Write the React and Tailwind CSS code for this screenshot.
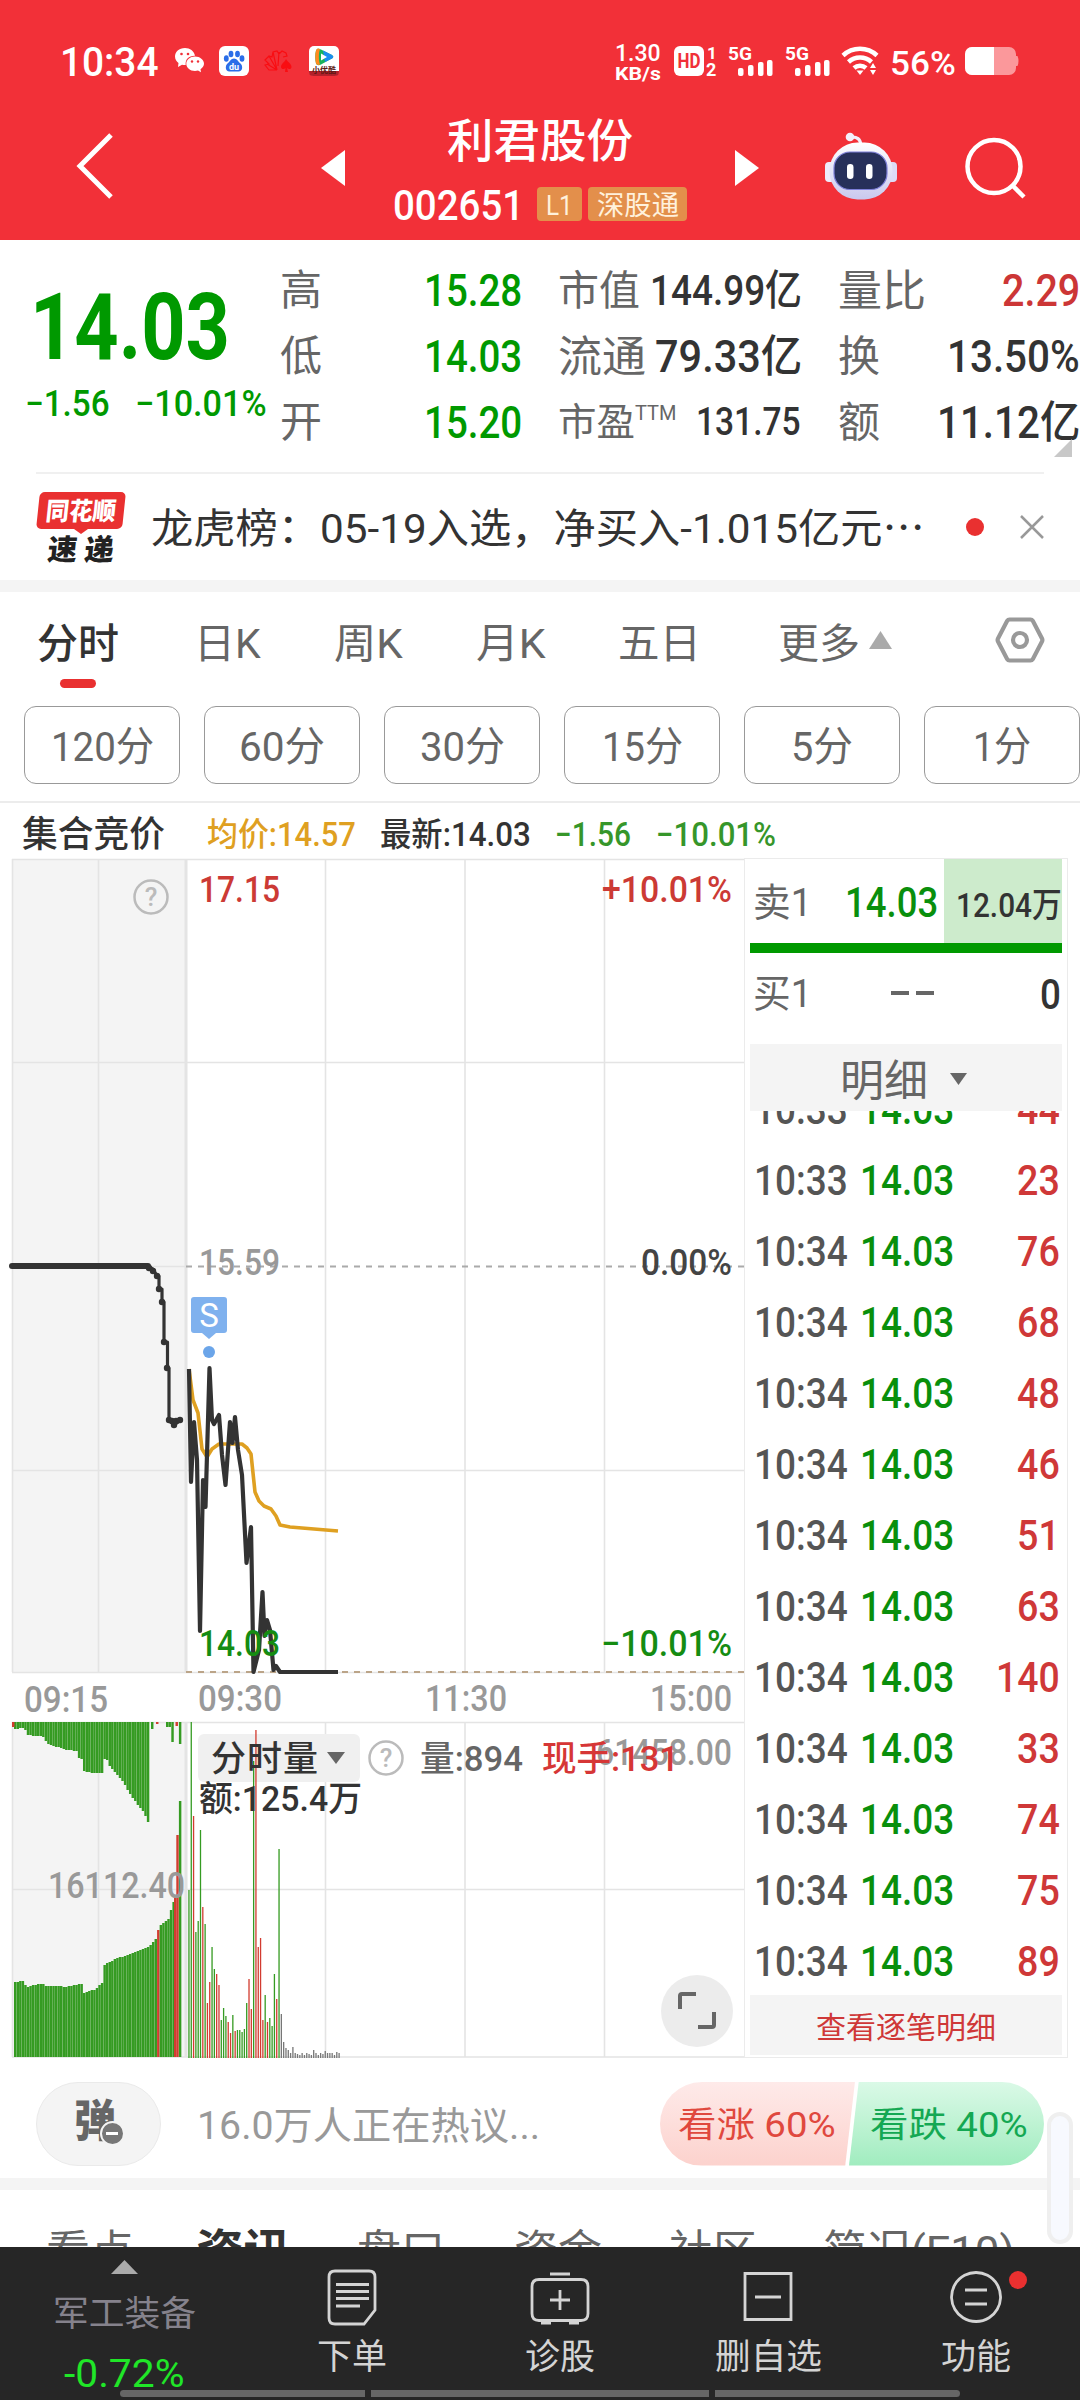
import { useLayoutEffect, useRef, useState } from "react";

// Single line of text, squeezed or stretched to the width of its box
const Fit = ({ className, children }) => {
  const box = useRef(null);
  const text = useRef(null);
  const [scale, setScale] = useState(1);

  useLayoutEffect(() => {
    setScale(box.current.clientWidth / text.current.offsetWidth);
  }, [children]);

  return (
    <div ref={box} className={"flex shrink-0 whitespace-nowrap leading-none " + className}>
      <span
        ref={text}
        className="inline-block shrink-0 origin-left"
        style={{ transform: `translateY(1.5px) scaleX(${scale})` }}
      >
        {children}
      </span>
    </div>
  );
};

const Signal = () => (
  <svg className="h-[32px] w-[46px] shrink-0" viewBox="0 0 46 32">
    <text x="0" y="15" fontSize="19" fontWeight="700" fill="#fff" textLength="24" lengthAdjust="spacingAndGlyphs">
      5G
    </text>
    <g fill="#fff">
      <rect x="10" y="23" width="5.500" height="8" rx="2" />
      <rect x="20" y="20" width="5.500" height="11" rx="2" />
      <rect x="30" y="17" width="5.500" height="14" rx="2" />
      <rect x="39" y="15" width="5.500" height="16" rx="2" />
    </g>
  </svg>
);

const StatusBar = () => (
  <div className="flex h-[106px] items-center pt-[15px] text-white">
    <Fit className="ml-[60px] w-[98px] text-[40px] font-medium">10:34</Fit>
    {/* 알림 아이콘 */}
    <svg className="ml-[17px] h-[25px] w-[29px]" viewBox="0 0 29 25">
      <path d="M10 0C4 0 0 4 0 8.600c0 3 1.500 5 3.500 6.500L3 19l4-2.300c1.200.3 2.500.4 3.700.3C10 11 14 7.500 20 7.700 19 3 15 0 10 0z" fill="#fff" />
      <path d="M20 8.500c-5 0-8.700 3.400-8.700 7.300s3.700 7.200 8.700 7.200c1 0 2-.2 3-.5l3 1.800-.5-3c2-1.400 3.500-3.300 3.500-5.500 0-4-4-7.300-9-7.300z" fill="#fff" />
      <g fill="#f03038">
        <circle cx="6.500" cy="6" r="1.300" />
        <circle cx="13" cy="6" r="1.300" />
        <circle cx="17" cy="13.500" r="1.200" />
        <circle cx="23" cy="13.500" r="1.200" />
      </g>
    </svg>
    <svg className="ml-[15px] h-[30px] w-[30px]" viewBox="0 0 30 30">
      <rect width="30" height="30" rx="6" fill="#fff" />
      <g fill="#2b6de8">
        <ellipse cx="7.300" cy="12.500" rx="2.400" ry="3.200" />
        <ellipse cx="12" cy="8" rx="2.400" ry="3.300" />
        <ellipse cx="18.500" cy="8" rx="2.400" ry="3.300" />
        <ellipse cx="23" cy="12.500" rx="2.400" ry="3.200" />
        <path d="M15 12.500c3 0 4 3 6.500 5s2.500 8-2 8h-9c-4.500 0-4.500-6-2-8s3.500-5 6.500-5z" />
      </g>
      <text x="15" y="24" fontSize="9" fontWeight="700" fill="#fff" textAnchor="middle">du</text>
    </svg>
    <svg className="ml-[15px] h-[24px] w-[29px]" viewBox="0 0 29 24" fill="none" stroke="#f90d12" strokeWidth="1.200">
      <path d="M13 21H5l-4-5 4-1-4-4 4-4 3 1 1-5 4-1 2 3 3-3 4 2 1 3-4 1M3 15l10 6M5 7l8 14M9 3l4 18M15 3l-1 14" />
      <path d="M22 10c-1 3-5 4.500-5 8 0 2 3 3 4.500 1L21 23h3l-1-4c2 2 4.500 1 4.500-1 0-3.500-4-5-5.500-8z" fill="#f90d12" stroke="none" />
    </svg>
    <svg className="ml-[16px] h-[30px] w-[30px]" viewBox="0 0 30 30">
      <rect width="30" height="30" rx="5" fill="#fff" />
      <path d="M7 4.500C8 2 10 2.500 12 3.500L22 8.500c3 1.500 3 3 0 4.500L12 18.500c-2 1-4 1-5-1C6 14 6 8 7 4.500z" fill="#19b35a" />
      <path d="M7 4.500C8 2 10 2.500 11 3c-1.500 4-1.500 11 0 15.500-2 1-3.500 0-4-1C6 14 6 8 7 4.500z" fill="#ff8a1f" />
      <path d="M14 4.500l8 4c3 1.500 3 3 0 4.500l-6 3z" fill="#1c8df0" />
      <path d="M12 7.500l6 3.500-6 3.500z" fill="#fff" />
      <path d="M0 25h30v1a4 4 0 0 1-4 4H4a4 4 0 0 1-4-4z" fill="#b3202a" />
      <text x="15" y="27" fontSize="8" fontWeight="700" fill="#5a1a14" textAnchor="middle">小优酷</text>
    </svg>

    <div className="ml-[276px] flex flex-col gap-[0px]">
      <Fit className="w-[46px] text-[23px] font-medium">1.30</Fit>
      <Fit className="w-[46px] text-[18px] font-bold">KB/s</Fit>
    </div>
    <svg className="ml-[13px] h-[32px] w-[43px]" viewBox="0 0 43 32">
      <rect x="0" y="1" width="30" height="30" rx="6" fill="#fff" />
      <text x="3.500" y="23" fontSize="20" fontWeight="700" fill="#f03038" textLength="23" lengthAdjust="spacingAndGlyphs">HD</text>
      <text x="33" y="14" fontSize="17" fontWeight="700" fill="#fff">1</text>
      <text x="32" y="31" fontSize="18" fontWeight="700" fill="#fff">2</text>
    </svg>
    <div className="ml-[11px] flex gap-[11px]">
      <Signal />
      <Signal />
    </div>
    <svg className="ml-[10px] h-[30px] w-[40px]" viewBox="0 0 40 30" fill="none" stroke="#fff" strokeWidth="4.500">
      <path d="M2 9.500a25 25 0 0 1 34 0M7.500 16a17 17 0 0 1 23 0M13 22a9 9 0 0 1 12 0" />
      <path d="M15.500 24.500h7L19 29z" fill="#fff" stroke="none" />
      <path d="M29 22l3-5 3 5zM29 24l3 5 3-5z" fill="#fff" stroke="none" />
    </svg>
    <Fit className="mt-[2px] ml-[9px] w-[66px] text-[33px] font-medium">56%</Fit>
    <svg className="ml-[9px] h-[28px] w-[55px]" viewBox="0 0 55 28">
      <path d="M7 0h37a7 7 0 0 1 7 7v2h1.500q2 5 0 10H51v2a7 7 0 0 1-7 7H7a7 7 0 0 1-7-7V7a7 7 0 0 1 7-7z" fill="#fb989b" />
      <path d="M7 0h22v28H7a7 7 0 0 1-7-7V7a7 7 0 0 1 7-7z" fill="#fff" />
    </svg>
  </div>
);

const Robot = () => (
  <svg className="ml-[64px] h-[68px] w-[76px]" viewBox="0 0 76 68">
    <defs>
      <linearGradient id="shell" x1="0" y1="0" x2="0" y2="1">
        <stop offset="0" stopColor="#fff" />
        <stop offset="1" stopColor="#c9c8ee" />
      </linearGradient>
    </defs>
    <rect x="2" y="30" width="10" height="20" rx="4" fill="#eeecfb" />
    <rect x="64" y="30" width="10" height="20" rx="4" fill="#dddbf6" />
    <path d="M28 5q9-1 10 8" fill="none" stroke="#f3effb" strokeWidth="3" />
    <circle cx="27" cy="5" r="4.300" fill="#f4f0fb" />
    <rect x="6.500" y="10.500" width="63" height="57" rx="28" fill="url(#shell)" />
    <rect x="11" y="20" width="53" height="37.500" rx="16" fill="#27305a" stroke="#7d7fd8" strokeWidth="1.200" />
    <rect x="24" y="32" width="6.500" height="15" rx="3.200" fill="#fff" />
    <rect x="43" y="32" width="6.500" height="15" rx="3.200" fill="#fff" />
  </svg>
);

const TitleBar = () => (
  <div className="flex h-[134px] items-start">
    <svg className="mt-[27px] ml-[76px] h-[66px] w-[38px]" viewBox="0 0 38 66" fill="none" stroke="#fff" strokeWidth="5">
      <path d="M35 2L4 33L35 64" />
    </svg>
    <svg className="mt-[44px] ml-[207px] h-[36px] w-[24px]" viewBox="0 0 24 36">
      <path d="M24 0v36L0 18z" fill="#fff" />
    </svg>
    <div className="ml-[48px] flex w-[294px] flex-col items-center text-white">
      <Fit className="mt-[10px] -ml-[1px] w-[186px] text-[46px] font-medium">利君股份</Fit>
      <div className="mt-[21px] flex h-[42px] items-center">
        <Fit className="w-[131px] text-[42px] font-medium">002651</Fit>
        <div className="ml-[13px] flex h-[34px] w-[45px] items-center justify-center rounded-[4px] bg-[#e38f4b]">
          <Fit className="w-[27px] text-[27px] text-[#fff1dc]">L1</Fit>
        </div>
        <div className="ml-[6px] flex h-[34px] w-[99px] items-center justify-center rounded-[4px] bg-[#e38f4b]">
          <Fit className="w-[82px] text-[27px] text-[#fff1dc]">深股通</Fit>
        </div>
      </div>
    </div>
    <svg className="mt-[44px] ml-[48px] h-[36px] w-[24px]" viewBox="0 0 24 36">
      <path d="M0 0v36L24 18z" fill="#fff" />
    </svg>
    <div className="mt-[26px]">
      <Robot />
    </div>
    <svg className="mt-[31px] ml-[66px] h-[62px] w-[64px]" viewBox="0 0 64 62" fill="none" stroke="#fff" strokeWidth="4.500">
      <circle cx="29" cy="29.500" r="26.500" />
      <path d="M47 48L59 60" />
    </svg>
  </div>
);

const Quote = () => (
  <div className="flex h-[232px] pt-[16px]">
    <div className="w-[280px] text-[#009900]">
      <Fit className="mt-[24px] ml-[30px] w-[200px] text-[92px] font-bold">14.03</Fit>
      <div className="mt-[12px] flex h-[36px] items-center text-[36px] font-medium">
        <Fit className="ml-[25px] w-[85px]">−1.56</Fit>
        <Fit className="ml-[25px] w-[132px]">−10.01%</Fit>
      </div>
    </div>
    <div className="w-[242px] text-[44px] font-medium text-[#009900]">
      {[["高", "15.28"], ["低", "14.03"], ["开", "15.20"]].map(([name, value]) => (
        <div key={name} className="flex h-[66px] items-center justify-between">
          <Fit className="w-[42px] text-[42px] font-normal text-[#666]">{name}</Fit>
          <Fit className="w-[98px]">{value}</Fit>
        </div>
      ))}
    </div>
    <div className="ml-[36px] w-[244px] text-[#333]">
      <div className="flex h-[66px] items-center justify-between">
        <Fit className="w-[82px] text-[41px] text-[#666]">市值</Fit>
        <Fit className="w-[152px] text-[42px] font-medium">144.99亿</Fit>
      </div>
      <div className="flex h-[66px] items-center justify-between">
        <Fit className="w-[88px] text-[43px] text-[#666]">流通</Fit>
        <Fit className="w-[147px] text-[44px] font-medium">79.33亿</Fit>
      </div>
      <div className="flex h-[66px] items-center text-[#666]">
        <Fit className="-mt-[2px] w-[77px] text-[38px]">市盈</Fit>
        <Fit className="-mt-[20px] w-[41px] text-[20px]">TTM</Fit>
        <Fit className="-mt-[2px] ml-[20px] w-[105px] text-[38px] font-medium text-[#333]">131.75</Fit>
      </div>
    </div>
    <div className="relative ml-[36px] w-[242px] text-[44px] font-medium text-[#333]">
      <div className="flex h-[66px] items-center justify-between">
        <Fit className="w-[88px] text-[43px] font-normal text-[#666]">量比</Fit>
        <Fit className="w-[78px] text-[#cc3636]">2.29</Fit>
      </div>
      <div className="flex h-[66px] items-center justify-between">
        <Fit className="w-[42px] text-[42px] font-normal text-[#666]">换</Fit>
        <Fit className="w-[133px]">13.50%</Fit>
      </div>
      <div className="flex h-[66px] items-center justify-between">
        <Fit className="w-[42px] text-[42px] font-normal text-[#666]">额</Fit>
        <Fit className="w-[143px]">11.12亿</Fit>
      </div>
      <svg className="absolute top-[183px] right-[8px] h-[18px] w-[18px]" viewBox="0 0 18 18">
        <path d="M18 0v18H0z" fill="#c8c8c8" />
      </svg>
    </div>
  </div>
);

const News = () => (
  <div className="mx-[36px] flex h-[108px] items-center border-t-2 border-[#f0f0f0]">
    <div className="flex w-[90px] flex-col items-center">
      <div className="flex h-[37px] w-[86px] -skew-x-6 items-center justify-center rounded-[5px] bg-[#e93030]">
        <Fit className="-mt-[3px] w-[70px] text-[25px] font-black text-white">同花顺</Fit>
      </div>
      <svg className="h-[5px] w-[14px]" viewBox="0 0 14 5">
        <path d="M0 0h14L7 5z" fill="#e93030" />
      </svg>
      <div className="-skew-x-6">
        <Fit className="w-[66px] text-[29px] font-black text-[#222]">速 递</Fit>
      </div>
    </div>
    <Fit className="ml-[25px] w-[774px] text-[41px] text-[#333]">龙虎榜：05-19入选，净买入-1.015亿元⋯</Fit>
    <div className="ml-[41px] h-[18px] w-[18px] rounded-full bg-[#e93030]" />
    <svg className="ml-[36px] h-[24px] w-[24px]" viewBox="0 0 24 24" stroke="#999" strokeWidth="2.500">
      <path d="M1 1L23 23M23 1L1 23" />
    </svg>
  </div>
);

const ChartTabs = () => (
  <div className="flex h-[114px] items-start pt-[30px] text-[41px] text-[#666]">
    <div className="ml-[37px] flex flex-col items-center">
      <Fit className="w-[82px] font-medium text-[#333]">分时</Fit>
      <div className="mt-[16px] h-[9px] w-[36px] rounded-full bg-[#e93030]" />
    </div>
    <Fit className="ml-[75px] w-[67px]">日K</Fit>
    <Fit className="ml-[73px] w-[69px]">周K</Fit>
    <Fit className="ml-[73px] w-[70px]">月K</Fit>
    <Fit className="ml-[72px] w-[83px]">五日</Fit>
    <Fit className="ml-[77px] w-[82px]">更多</Fit>
    <svg className="mt-[9px] ml-[9px] h-[18px] w-[23px]" viewBox="0 0 23 18">
      <path d="M11.500 0L23 18H0z" fill="#aaa" />
    </svg>
    <svg className="-mt-[5px] ml-[103px] h-[46px] w-[50px]" viewBox="0 0 50 46" fill="none" stroke="#999" strokeWidth="4.200">
      <path d="M14.500 2.500h21q1.500 0 2.300 1.300L47 21.500q.8 1.500 0 3l-9.200 17.700q-.8 1.300-2.300 1.300h-21q-1.500 0-2.300-1.300L3 24.500q-.8-1.500 0-3L12.200 3.800q.8-1.300 2.300-1.300z" />
      <circle cx="25" cy="23" r="7" />
    </svg>
  </div>
);

const periods = [
  ["120分", "w-[103px]"],
  ["60分", "w-[86px]"],
  ["30分", "w-[85px]"],
  ["15分", "w-[81px]"],
  ["5分", "w-[62px]"],
  ["1分", "w-[58px]"],
];

const Periods = () => (
  <div className="flex h-[97px] gap-[24px] border-b-2 border-[#ececec] pl-[24px]">
    {periods.map(([label, width]) => (
      <div
        key={label}
        className="flex h-[78px] w-[156px] shrink-0 items-center justify-center rounded-[12px] border border-[#999]"
      >
        <Fit className={"text-[41px] text-[#666] " + width}>{label}</Fit>
      </div>
    ))}
  </div>
);

const InfoLine = () => (
  <div className="flex h-[55px] items-center pt-[4px] text-[33px] font-medium text-[#333]">
    <Fit className="ml-[22px] w-[143px] text-[36px]">集合竞价</Fit>
    <Fit className="ml-[42px] w-[149px] text-[#dfa021]">均价:14.57</Fit>
    <Fit className="ml-[24px] w-[151px]">最新:14.03</Fit>
    <Fit className="ml-[24px] w-[76px] text-[#36962a]">−1.56</Fit>
    <Fit className="ml-[25px] w-[120px] text-[#36962a]">−10.01%</Fit>
  </div>
);

const GREEN = "#359b22";
const RED = "#d23c30";

// 집합경쟁 구간 상단/하단 막대 윤곽 [x, y]
const auctionTop = [
  [12, 1729], [24, 1728], [25, 1735], [36, 1736], [44, 1737], [45, 1743], [53, 1746], [66, 1750], [76, 1751],
  [78, 1758], [82, 1759], [83, 1771], [91, 1773], [102, 1773], [103, 1759], [107, 1761], [109, 1767],
  [115, 1774], [122, 1782], [128, 1793], [137, 1805], [143, 1813], [146, 1820], [148.500, 1825],
];
const auctionBottom = [
  [12, 1982], [23, 1981], [25, 1987], [37, 1984], [43, 1984], [45, 1986], [57, 1986], [63, 1987], [80, 1984],
  [82, 1984], [83, 1993], [95, 1989], [100, 1983], [102, 1983], [103.500, 1964], [117, 1958], [133, 1953],
  [148, 1946], [153, 1941], [155, 1939], [159, 1925], [168, 1918], [170, 1909], [172, 1903], [175, 1897],
];

const levelAt = (points, x) => {
  const i = points.findIndex((p) => p[0] >= x);
  if (i <= 0) return i === 0 ? points[0][1] : points[points.length - 1][1];
  const [x0, y0] = points[i - 1];
  const [x1, y1] = points[i];
  return Math.round(y0 + ((y1 - y0) * (x - x0)) / (x1 - x0));
};

const auctionBars = [];
for (let i = 0; i < 66; i++) {
  const x = 14 + i * 2.555;
  if (x < 148) {
    auctionBars.push({ x, y: 1722, h: levelAt(auctionTop, x) - 1722, fill: GREEN });
  }
  if (x < 174) {
    const red = i === 56;
    const y = red ? 1930 : levelAt(auctionBottom, x);
    auctionBars.push({ x, y, h: 2057 - y, fill: red ? RED : GREEN });
  }
}
auctionBars.push(
  { x: 12, y: 1722, h: 5, fill: RED },
  { x: 151, y: 1722, h: 7, fill: GREEN },
  { x: 156, y: 1722, h: 2, fill: RED },
  { x: 166, y: 1722, h: 5, fill: GREEN },
  { x: 168.500, y: 1722, h: 5, fill: GREEN },
  { x: 171.300, y: 1722, h: 20, fill: GREEN },
  { x: 175.500, y: 1722, h: 4, fill: RED },
  { x: 178.900, y: 1722, h: 22, fill: GREEN },
  { x: 174, y: 1896, h: 161, fill: RED },
  { x: 176.300, y: 1835, h: 222, fill: RED },
  { x: 178.900, y: 1801, h: 256, fill: GREEN }
);

// 분시 거래량: 상단 y 좌표와 색 (g 녹색 r 적색 k 회색)
const volumes =
  "1890g 1722g 1816r 1932g 1921g 1830g 1907r 1924g 2003r 1982r 1947g 1969g 1974r 1985r 2020g 2008g 2016g 2022r 2033r 2015g 2031r 2030g 2030g 2032g 2029g 2003g 1979r 2009r 1761g 1730r 1947r 1938r 2020r 1995g 2022r 2018g 2026g 1974g 1999r 1849g 2014k 2042k 2048k 2050k 2053k 2047k 2053k 2054k 2055k 2053k 2055k 2053k 2054k 2055k 2050k 2053k 2055k 2053k 2054k 2051k 2053k 2053k 2053k 2055k 2052k 2053k".split(
    " "
  );
const volumeColors = { g: GREEN, r: RED, k: "#777" };

const price =
  "189,1369 191,1482 194,1422 197,1460 200,1631 203,1480 205.500,1507 209.500,1368 212,1420 214,1424 219,1415 222,1455 225.500,1485 230,1422 232.500,1443 235,1417 238,1450 242,1475 246.500,1563 251,1527 253.500,1672 259,1650 262.500,1592 264.500,1636 267,1620 270,1630 273.500,1670 276,1666 280,1672 338,1672";
const average =
  "189,1369 193,1400 198,1413 202,1449 207,1457 212,1449 219,1444 242,1444 247,1448 251,1454 255,1492 259,1501 264,1506 271,1509 276,1516 280,1525 290,1527 338,1531";
const auction =
  "12,1266 148,1266 153,1269 157,1276 159,1276 159,1289 162,1289 162,1302 164,1302 164,1342 167.500,1342 167.500,1368 169,1368 169,1420 174,1425 181,1420";

const Label = ({ x, y, w, fill = "#999", size = 36, children }) => (
  <text x={x} y={y} fill={fill} fontSize={size} fontWeight="500" textLength={w} lengthAdjust="spacingAndGlyphs">
    {children}
  </text>
);

const Help = ({ cx, cy }) => (
  <g>
    <circle cx={cx} cy={cy} r="16.500" fill="none" stroke="#bbb" strokeWidth="2.500" />
    <text x={cx} y={cy + 9} fill="#bbb" fontSize="26" fontWeight="500" textAnchor="middle">?</text>
  </g>
);

const Chart = () => (
  <svg className="h-[1200px] w-[744px] shrink-0" viewBox="0 858 744 1200">
    <rect x="12" y="859" width="174" height="813" fill="#f4f4f4" />
    <rect x="12" y="1722" width="174" height="335" fill="#f4f4f4" />
    <g stroke="#e4e4e4" strokeWidth="1.600">
      <path d="M12 859.500H744M12 1062.500H744M12 1266.500H186M12 1470.500H744M12 1672.500H744" />
      <path d="M12 1722.500H744M12 1889.500H744M12 2057H744" />
      {[12.5, 98.5, 325.5, 465, 604.5].map((x) => (
        <path key={x} d={`M${x} 859V1672M${x} 1722V2057`} />
      ))}
      <path d="M186 859V1672M186 1722V2057" strokeWidth="3" />
    </g>
    <path d="M186 1266.500H744" stroke="#aaa" strokeWidth="1.800" strokeDasharray="6 6" />
    <path d="M186 1672H744" stroke="#bba488" strokeWidth="2" strokeDasharray="6 6" />

    <rect x="198" y="1734" width="162" height="48" rx="6" fill="#f0f0f0" />
    {/* 거래량 */}
    {auctionBars.map((bar, i) => (
      <rect key={i} x={bar.x} y={bar.y} width="2.450" height={bar.h} fill={bar.fill} />
    ))}
    {volumes.map((v, i) => {
      const top = Number(v.slice(0, 4));
      return (
        <rect key={i} x={188.300 + i * 2.310} y={top} width="1.300" height={2058 - top} fill={volumeColors[v[4]]} />
      );
    })}

    {/* 시세선 */}
    <g fill="none" strokeLinejoin="round">
      <polyline points={average} stroke="#dfa021" strokeWidth="3.600" />
      <polyline points={price} stroke="#333" strokeWidth="4.200" />
      <polyline points={auction} stroke="#333" strokeWidth="3.200" />
      <path d="M12 1266H148" stroke="#333" strokeWidth="6" strokeLinecap="round" />
    </g>
    <g fill="#333">
      {[[149, 1268], [153, 1271], [157, 1276], [159, 1289], [162, 1302], [164, 1342], [167, 1368], [169, 1420], [174, 1425], [172, 1421], [176, 1421], [180, 1420]].map(
        ([cx, cy]) => (
          <circle key={cx} cx={cx} cy={cy} r="3.200" />
        )
      )}
    </g>

    {/* 매도 표시 */}
    <path d="M194 1297h30q3 0 3 3v30q0 3-3 3h-8l-7 6-7-6h-8q-3 0-3-3v-30q0-3 3-3z" fill="#7fb1ee" />
    <text x="209" y="1327" fontSize="33" fill="#fff" textAnchor="middle">S</text>
    <circle cx="209" cy="1352" r="6" fill="#6ba5e9" />

    <Help cx={151} cy={897} />
    <Label x={199} y={902} w={81} fill="#cc3a35">17.15</Label>
    <Label x={602} y={902} w={130} fill="#cc3a35">+10.01%</Label>
    <Label x={199} y={1275} w={81}>15.59</Label>
    <Label x={641} y={1275} w={91} fill="#444">0.00%</Label>
    <Label x={199} y={1656} w={81} fill="#158c12">14.03</Label>
    <Label x={601} y={1656} w={131} fill="#158c12">−10.01%</Label>
    <Label x={24} y={1712} w={84}>09:15</Label>
    <Label x={198} y={1711} w={84}>09:30</Label>
    <Label x={425} y={1711} w={82}>11:30</Label>
    <Label x={650} y={1711} w={82}>15:00</Label>

    <text x="211" y="1771" fontSize="35" fontWeight="500" fill="#333" textLength="107">分时量</text>
    <path d="M327 1752h18l-9 12z" fill="#666" />
    <Help cx={386} cy={1758} />
    <Label x={48} y={1898} w={137}>16112.40</Label>
    <Label x={199} y={1811} w={163} size={35} fill="#333">额:125.4万</Label>
    <Label x={596} y={1765} w={136}>61458.00</Label>
    <Label x={420} y={1771} w={103} size={35} fill="#666">量:894</Label>
    <Label x={542} y={1771} w={137} size={35} fill="#d63636">现手:131</Label>

    <circle cx="697" cy="2011" r="36" fill="#ececec" />
    <path d="M680 2009v-13q0-2 2-2h14M698 2027h14q2 0 2-2v-13" fill="none" stroke="#666" strokeWidth="4" />
  </svg>
);

const trades = [
  ["10:33", 44],
  ["10:33", 23],
  ["10:34", 76],
  ["10:34", 68],
  ["10:34", 48],
  ["10:34", 46],
  ["10:34", 51],
  ["10:34", 63],
  ["10:34", 140],
  ["10:34", 33],
  ["10:34", 74],
  ["10:34", 75],
  ["10:34", 89],
];

const OrderBook = () => (
  <div className="flex h-[1200px] w-[324px] flex-col border border-[#ebebeb] px-[5px] text-[42px] font-medium">
    <div className="flex h-[84px] shrink-0 items-center">
      <Fit className="ml-[3px] w-[59px] text-[39px] font-normal text-[#666]">卖1</Fit>
      <Fit className="ml-[33px] w-[93px] text-[#098f0c]">14.03</Fit>
      <div className="ml-[6px] flex h-[84px] w-[118px] items-center justify-end bg-[#cdebcc]">
        <Fit className="mt-[4px] w-[106px] text-[34px] text-[#333]">12.04万</Fit>
      </div>
    </div>
    <div className="h-[10px] shrink-0 bg-[#009900]" />
    <div className="flex h-[79px] shrink-0 items-center">
      <Fit className="ml-[3px] w-[59px] text-[39px] font-normal text-[#666]">买1</Fit>
      <div className="ml-[79px] h-[4px] w-[18px] bg-[#666]" />
      <div className="ml-[7px] h-[4px] w-[18px] bg-[#666]" />
      <Fit className="ml-[106px] w-[21px] text-[#333]">0</Fit>
    </div>
    <div className="mt-[12px] flex h-[67px] shrink-0 items-center bg-[#f4f4f4]">
      <Fit className="mt-[4px] ml-[90px] w-[88px] text-[43px] font-normal text-[#666]">明细</Fit>
      <svg className="mt-[3px] ml-[22px] h-[12px] w-[17px]" viewBox="0 0 17 12">
        <path d="M0 0h17L8.500 12z" fill="#666" />
      </svg>
    </div>
    <div className="flex h-[884px] shrink-0 flex-col justify-end overflow-hidden">
      {trades.map(([time, count], i) => (
        <div key={i} className="flex h-[71px] shrink-0 items-center">
          <Fit className="ml-[4px] w-[94px] text-[#555]">{time}</Fit>
          <Fit className="ml-[12px] w-[94px] text-[#098f0c]">14.03</Fit>
          <div className="flex grow justify-end pr-[2px] text-[#cf3838]">
            <Fit className={count > 99 ? "w-[64px]" : "w-[43px]"}>{String(count)}</Fit>
          </div>
        </div>
      ))}
    </div>
    <div className="flex h-[60px] shrink-0 items-center justify-center bg-[#f4f4f4]">
      <Fit className="mt-[2px] w-[180px] text-[30px] font-normal text-[#cf3838]">查看逐笔明细</Fit>
    </div>
  </div>
);

const Discussion = () => (
  <div className="relative flex h-[120px] items-center pt-[11px]">
    <div className="ml-[36px] flex h-[84px] w-[125px] items-center justify-center rounded-full border border-[#eaeaea] bg-[#f4f4f4]">
      <div className="relative -mt-[8px] -ml-[8px]">
        <Fit className="w-[42px] text-[44px] font-black text-[#666]">弹</Fit>
        <div className="absolute top-[23px] left-[26px] flex h-[25px] w-[25px] items-center justify-center rounded-full border-2 border-[#f4f4f4] bg-[#777]">
          <div className="h-[3px] w-[12px] bg-white" />
        </div>
      </div>
    </div>
    <Fit className="ml-[36px] w-[343px] text-[38px] text-[#999]">16.0万人正在热议...</Fit>
    <div className="ml-[120px] flex h-[84px] w-[384px] overflow-hidden rounded-full">
      <div className="flex w-[195px] items-center bg-linear-to-b from-[#feeae9] to-[#fcd2cd] [clip-path:polygon(0_0,100%_0,95%_100%,0_100%)]">
        <Fit className="ml-[18px] w-[158px] text-[35px] text-[#e0483e]">看涨 60%</Fit>
      </div>
      <div className="-ml-[6px] flex w-[195px] items-center bg-linear-to-b from-[#daf9e7] to-[#a0ecbf] [clip-path:polygon(5%_0,100%_0,100%_100%,0_100%)]">
        <Fit className="ml-[21px] w-[158px] text-[35px] text-[#14a853]">看跌 40%</Fit>
      </div>
    </div>
    {/* 스크롤 핸들 */}
    <div className="absolute top-[54px] right-[7px] z-10 h-[132px] w-[26px] rounded-full border-[4px] border-[#efefef] bg-[#f7f9fe]" />
  </div>
);

const PageTabs = () => (
  <div className="flex h-[57px] items-start overflow-hidden pt-[38px] text-[43px] text-[#666]">
    <Fit className="ml-[46px] w-[88px]">看点</Fit>
    <Fit className="-mt-[2px] ml-[62px] w-[95px] text-[47px] font-bold text-[#333]">资讯</Fit>
    <Fit className="ml-[66px] w-[88px]">盘口</Fit>
    <Fit className="ml-[69px] w-[88px]">资金</Fit>
    <Fit className="ml-[67px] w-[88px]">社区</Fit>
    <Fit className="ml-[66px] w-[192px]">简况(F10)</Fit>
  </div>
);

const navItems = [
  {
    label: "下单",
    width: "w-[70px]",
    icon: (
      <path d="M8 2h34q6 0 6 6v33l-11 14H8q-6 0-6-6V8q0-6 6-6zM9 15.500h33M9 22.500h33M9 29.500h33M9 37h24" />
    ),
  },
  {
    label: "诊股",
    width: "w-[70px]",
    icon: (
      <path d="M15 5h20M4 10.500h42q7 0 7 7v27q0 7-7 7H4q-7 0-7-7v-27q0-7 7-7zM25 21v20M15 31h20M6 54h10M34 54h10" />
    ),
  },
  { label: "删自选", width: "w-[107px]", icon: <path d="M2 4.500h46v46H2zM12 28h26" /> },
  {
    label: "功能",
    width: "w-[70px]",
    icon: <path d="M25 3.500a24.500 24.500 0 1 0 .1 0zM14 21h22M14 35h22" />,
  },
];

const BottomNav = () => (
  <div className="relative flex h-[153px] shrink-0 bg-[#262626]">
    <div className="flex w-[248px] flex-col items-center pt-[13px]">
      <svg className="h-[14px] w-[27px]" viewBox="0 0 27 14">
        <path d="M13.500 0L27 14H0z" fill="#aaa" />
      </svg>
      <Fit className="mt-[21px] w-[143px] text-[35px] text-[#85828c]">军工装备</Fit>
      <Fit className="mt-[23px] w-[120px] text-[38px] text-[#20e628]">-0.72%</Fit>
    </div>
    {navItems.map((item) => (
      <div key={item.label} className="flex w-[208px] flex-col items-center pt-[22px]">
        <svg className="h-[57px] w-[60px]" viewBox="-5 0 60 57" fill="none" stroke="#d4d4d4" strokeWidth="2.800">
          {item.icon}
        </svg>
        <Fit className={"mt-[12px] text-[35px] text-[#d4d4d4] " + item.width}>{item.label}</Fit>
      </div>
    ))}
    <div className="absolute top-[24px] left-[1009px] h-[18px] w-[18px] rounded-full bg-[#e93030]" />
    <div className="absolute bottom-[3px] left-[120px] flex h-[7px] w-[840px] gap-[6px] overflow-hidden rounded-full">
      <div className="w-[245px] bg-[#666]" />
      <div className="w-[338px] bg-[#666]" />
      <div className="grow bg-[#666]" />
    </div>
  </div>
);

const App = () => {
  return (
    <div className="flex h-[2400px] w-[1080px] flex-col overflow-hidden bg-white font-['Roboto','Noto_Sans_CJK_SC',sans-serif]">
      <div className="h-[240px] shrink-0 bg-[#f23038]">
        <StatusBar />
        <TitleBar />
      </div>
      <Quote />
      <News />
      <div className="h-[12px] shrink-0 bg-[#f4f4f4]" />
      <ChartTabs />
      <Periods />
      <InfoLine />
      <div className="flex">
        <Chart />
        <OrderBook />
      </div>
      <Discussion />
      <div className="h-[12px] shrink-0 bg-[#f4f4f4]" />
      <PageTabs />
      <BottomNav />
    </div>
  );
};

export default App;
